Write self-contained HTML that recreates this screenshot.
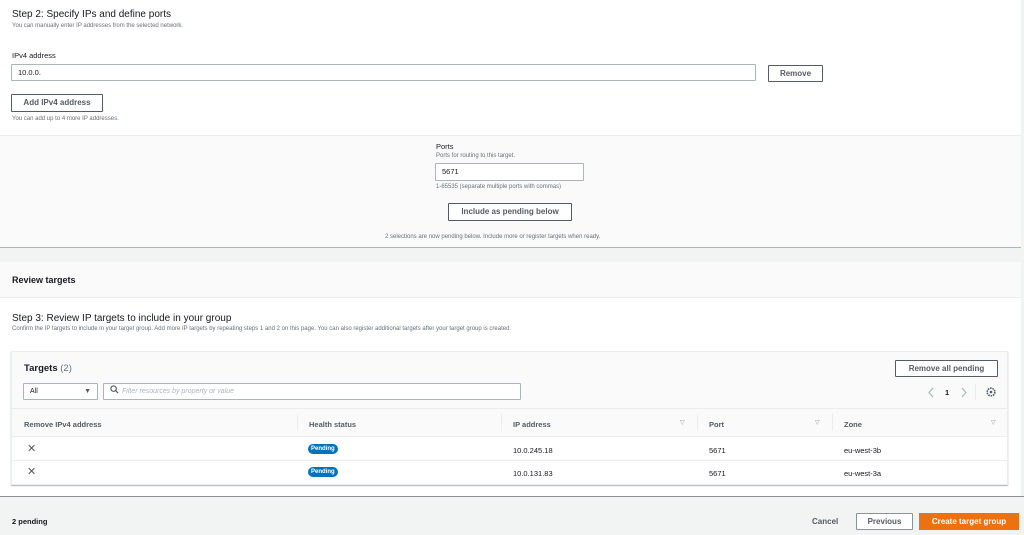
<!DOCTYPE html>
<html><head><style>
*{box-sizing:border-box;margin:0;padding:0}
body{width:1024px;height:535px;overflow:hidden;background:#f2f3f3;font-family:"Liberation Sans",sans-serif;color:#16191f;position:relative}
.a{position:absolute}
.btn{position:absolute;border:1px solid #545b64;background:#fff;font-size:8px;font-weight:bold;color:#545b64;text-align:center;border-radius:1px}
.small{font-size:6px;color:#687078}
.inp{position:absolute;border:1px solid #aab7b8;background:#fff;font-size:8px;padding-left:6px;border-radius:1px}
.th{position:absolute;top:420px;font-size:7.5px;font-weight:bold;color:#545b64}
.td{position:absolute;font-size:7.5px;color:#16191f}
.pill{position:absolute;background:#0073bb;color:#fff;font-size:6px;font-weight:bold;border-radius:6px;padding:2px 3px}
.x{position:absolute;font-size:11px;color:#545b64}
.tri{position:absolute;top:419px;font-size:6px;color:#879596}
</style></head><body>
<div class="a" style="left:0;top:0;width:1021px;height:135px;background:#fff"></div>
<div class="a" style="left:12px;top:9px;font-size:10px">Step 2: Specify IPs and define ports</div>
<div class="a small" style="left:12px;top:23px">You can manually enter IP addresses from the selected network.</div>
<div class="a" style="left:12px;top:51px;font-size:7.5px">IPv4 address</div>
<div class="inp" style="left:11px;top:64px;width:745px;height:17px;line-height:15px;font-size:7.5px">10.0.0.</div>
<div class="btn" style="left:768px;top:65px;width:55px;height:17px;line-height:15px">Remove</div>
<div class="btn" style="left:11px;top:94px;width:92px;height:18px;line-height:16px">Add IPv4 address</div>
<div class="a small" style="left:12px;top:116px">You can add up to 4 more IP addresses.</div>

<div class="a" style="left:0;top:135px;width:1021px;height:113px;background:#fafafa;border-top:1px solid #eaeded;border-bottom:1px solid #aab7b8"></div>
<div class="a" style="left:436px;top:142px;font-size:7.5px">Ports</div>
<div class="a small" style="left:436px;top:153px">Ports for routing to this target.</div>
<div class="inp" style="left:435px;top:163px;width:149px;height:18px;line-height:16px;font-size:7.5px">5671</div>
<div class="a small" style="left:436px;top:184px">1-65535 (separate multiple ports with commas)</div>
<div class="btn" style="left:448px;top:203px;width:124px;height:18px;line-height:16px">Include as pending below</div>
<div class="a small" style="left:385px;top:234px">2 selections are now pending below. Include more or register targets when ready.</div>

<div class="a" style="left:0;top:262px;width:1021px;height:234px;background:#fff"></div>
<div class="a" style="left:0;top:262px;width:1021px;height:36px;background:#fafafa;border-bottom:1px solid #eaeded"></div>
<div class="a" style="left:12px;top:275px;font-size:9px;font-weight:bold">Review targets</div>
<div class="a" style="left:12px;top:313px;font-size:10px">Step 3: Review IP targets to include in your group</div>
<div class="a small" style="left:12px;top:326px">Confirm the IP targets to include in your target group. Add more IP targets by repeating steps 1 and 2 on this page. You can also register additional targets after your target group is created.</div>

<div class="a" style="left:11px;top:351px;width:997px;height:134px;background:#fff;border:1px solid #eaeded;box-shadow:0 1px 1px #aab7b8"></div>
<div class="a" style="left:12px;top:352px;width:995px;height:57px;background:#fafafa;border-bottom:1px solid #eaeded"></div>
<div class="a" style="left:24px;top:363px;font-size:9.5px;font-weight:bold">Targets <span style="font-weight:normal;color:#687078">(2)</span></div>
<div class="btn" style="left:895px;top:360px;width:103px;height:17px;line-height:15px">Remove all pending</div>
<div class="inp" style="left:23px;top:383px;width:75px;height:17px;line-height:15px;font-size:7px">All<span style="position:absolute;right:6px;font-size:7px;color:#545b64">▼</span></div>
<div class="inp" style="left:103px;top:383px;width:418px;height:17px;line-height:15px;font-size:7px;color:#aab7b8;font-style:italic;padding-left:6px"><svg width="9" height="9" viewBox="0 0 10 10" style="vertical-align:-1px;margin-right:3px"><circle cx="4" cy="4" r="3" fill="none" stroke="#545b64" stroke-width="1.3"/><path d="M6.3 6.3L9 9" stroke="#545b64" stroke-width="1.3"/></svg>Filter resources by property or value</div>
<svg class="a" style="left:927px;top:387px" width="8" height="11" viewBox="0 0 8 11"><path d="M6 1L2 5.5L6 10" fill="none" stroke="#aab7b8" stroke-width="1.2"/></svg>
<div class="a" style="left:945px;top:388px;font-size:7.5px;font-weight:bold">1</div>
<svg class="a" style="left:960px;top:387px" width="8" height="11" viewBox="0 0 8 11"><path d="M2 1L6 5.5L2 10" fill="none" stroke="#aab7b8" stroke-width="1.2"/></svg>
<div class="a" style="left:975px;top:384px;width:1px;height:16px;background:#eaeded"></div>
<svg class="a" style="left:986px;top:387px" width="10" height="10" viewBox="0 0 10 10"><circle cx="5" cy="5" r="3.8" fill="none" stroke="#545b64" stroke-width="1.6" stroke-dasharray="1.6 0.8"/><circle cx="5" cy="5" r="1.3" fill="#545b64"/></svg>

<div class="a" style="left:12px;top:409px;width:995px;height:28px;background:#fafafa;border-bottom:1px solid #eaeded"></div>
<div class="th" style="left:24px">Remove IPv4 address</div>
<div class="a" style="left:297px;top:414px;width:1px;height:17px;background:#eaeded"></div>
<div class="th" style="left:309px">Health status</div>
<div class="a" style="left:501px;top:414px;width:1px;height:17px;background:#eaeded"></div>
<div class="th" style="left:513px">IP address</div><div class="tri" style="left:680px">▽</div>
<div class="a" style="left:697px;top:414px;width:1px;height:17px;background:#eaeded"></div>
<div class="th" style="left:709px">Port</div><div class="tri" style="left:815px">▽</div>
<div class="a" style="left:832px;top:414px;width:1px;height:17px;background:#eaeded"></div>
<div class="th" style="left:844px">Zone</div><div class="tri" style="left:991px">▽</div>

<div class="x" style="left:27px;top:442px">✕</div>
<div class="pill" style="left:308px;top:444px">Pending</div>
<div class="td" style="left:513px;top:446px">10.0.245.18</div>
<div class="td" style="left:709px;top:446px">5671</div>
<div class="td" style="left:844px;top:446px">eu-west-3b</div>
<div class="a" style="left:12px;top:460px;width:995px;height:1px;background:#eaeded"></div>
<div class="x" style="left:27px;top:465px">✕</div>
<div class="pill" style="left:308px;top:467px">Pending</div>
<div class="td" style="left:513px;top:469px">10.0.131.83</div>
<div class="td" style="left:709px;top:469px">5671</div>
<div class="td" style="left:844px;top:469px">eu-west-3a</div>

<div class="a" style="left:0;top:496px;width:1024px;height:1px;background:#879596"></div>
<div class="a" style="left:12px;top:517px;font-size:7.5px;font-weight:bold">2 pending</div>
<div class="a" style="left:812px;top:517px;font-size:8px;font-weight:bold;color:#545b64">Cancel</div>
<div class="btn" style="left:856px;top:513px;width:57px;height:17px;line-height:15px;border-color:#879596">Previous</div>
<div class="a" style="left:919px;top:513px;width:100px;height:17px;line-height:17px;background:#ec7211;color:#fff;font-size:8px;font-weight:bold;text-align:center">Create target group</div>
</body></html>
